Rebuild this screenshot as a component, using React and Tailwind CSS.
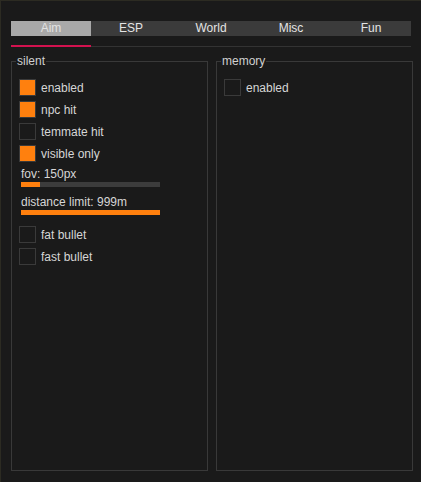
import { useState } from 'react'

const TABS = ['Aim', 'ESP', 'World', 'Misc', 'Fun']

function Check({ label, on }) {
  return (
    <div className="flex items-center h-[17px] mb-[5px]">
      <span
        className={`w-[17px] h-[17px] shrink-0 border ${
          on ? 'bg-[#ff800e] border-[#3a3a3a]' : 'border-[#3a3a3a]'
        }`}
      />
      <span className="ml-[5px] text-[12px] text-[#d6d6d6] leading-[14px]">{label}</span>
    </div>
  )
}

function Slider({ label, pct }) {
  return (
    <div className="ml-[2px]">
      <div className="text-[12px] text-[#d6d6d6] leading-[14px]">{label}</div>
      <div className="mt-[1px] w-[139px] h-[5px] bg-[#3c3c3c]">
        <div className="h-full bg-[#ff800e]" style={{ width: `${pct}%` }} />
      </div>
    </div>
  )
}

function Group({ title, children }) {
  return (
    <fieldset className="w-[197px] h-[417px] border border-[#393939] pl-[7px] pt-[11px] min-w-0">
      <legend className="ml-[-3px] px-[1px] text-[12px] leading-[14px] text-[#d0d0d0]">{title}</legend>
      {children}
    </fieldset>
  )
}

export default function App() {
  const [active, setActive] = useState('Aim')

  return (
    <div
      className="w-[421px] h-[482px] bg-[#1a1a1a] border-l border-t border-[#2c2b22] pl-[10px] pt-[20px]"
      style={{ fontFamily: '"Liberation Sans", Arial, sans-serif' }}
    >
      <div className="flex w-[400px] h-[15px] bg-[#3b3b3b]">
        {TABS.map(t => (
          <button
            key={t}
            onClick={() => setActive(t)}
            className={`w-[80px] h-[15px] text-[12px] leading-[15px] text-center ${
              active === t ? 'bg-[#a9a9a9] text-[#e2e2e2]' : 'text-[#e4e4e4]'
            }`}
          >
            {t}
          </button>
        ))}
      </div>

      <div className="relative mt-[10px] w-[400px] h-[1px] bg-[#333333]">
        <div className="absolute left-0 top-[-1px] w-[80px] h-[2px] bg-[#d3124f]" />
      </div>

      <div className="flex gap-[8px] mt-[7px]">
        <Group title="silent">
          <Check label="enabled" on />
          <Check label="npc hit" on />
          <Check label="temmate hit" />
          <Check label="visible only" on />
          <Slider label="fov: 150px" pct={14} />
          <div className="mt-[8px]">
            <Slider label="distance limit: 999m" pct={100} />
          </div>
          <div className="mt-[11px]">
            <Check label="fat bullet" />
            <Check label="fast bullet" />
          </div>
        </Group>
        <Group title="memory">
          <Check label="enabled" />
        </Group>
      </div>
    </div>
  )
}
